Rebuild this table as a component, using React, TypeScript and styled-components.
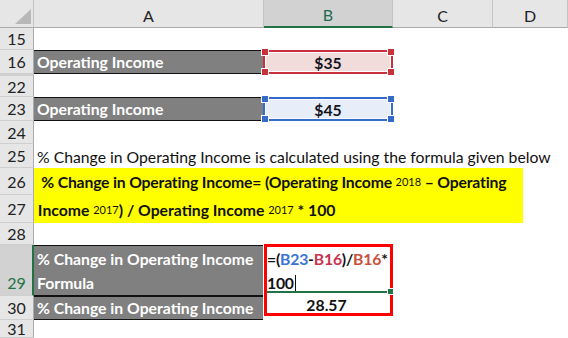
import React from 'react';
import styled, { createGlobalStyle } from 'styled-components';

const Global = createGlobalStyle`
  html, body { margin: 0; padding: 0; background: #fff; }
  body { font-family: Lato, "Open Sans", sans-serif; }
`;

const COLS = '34px 230px 129px 100px 75px';

const Sheet = styled.div`
  width: 568px;
  height: 338px;
  overflow: hidden;
  display: flex;
  flex-direction: column;
  position: relative;
  background: #fff;
  color: #111;
  font-size: 15.75px;
`;

const Row = styled.div<{ $h: number }>`
  display: grid;
  grid-template-columns: ${COLS};
  grid-template-rows: ${(p) => p.$h}px;
  height: ${(p) => p.$h}px;
  flex: none;
  position: relative;
`;

const Corner = styled.div`
  background: #e6e6e6;
  border-right: 1px solid #c4c4c4;
  border-bottom: 1px solid #ababab;
  position: relative;
  &::after {
    content: '';
    position: absolute;
    right: 2px;
    bottom: 3px;
    width: 0;
    height: 0;
    border-left: 16px solid transparent;
    border-bottom: 15px solid #b8b8b8;
  }
`;

const ColHead = styled.div<{ $active?: boolean }>`
  background: ${(p) => (p.$active ? '#d2d2d2' : '#e6e6e6')};
  color: ${(p) => (p.$active ? '#1f6b52' : '#222')};
  border-right: 1px solid #c4c4c4;
  border-bottom: ${(p) => (p.$active ? '2px solid #217346' : '1px solid #ababab')};
  display: flex;
  align-items: center;
  justify-content: center;
  font-size: 16px;
  padding-top: 3px;
  box-sizing: border-box;
`;

const RowNum = styled.div<{ $active?: boolean; $double?: boolean; $bottom?: boolean }>`
  background: ${(p) => (p.$active ? '#d2d2d2' : '#e6e6e6')};
  color: ${(p) => (p.$active ? '#217346' : '#222')};
  border-right: ${(p) => (p.$active ? '2px solid #217346' : '1px solid #ababab')};
  border-bottom: 1px solid #cfcfcf;
  border-top: ${(p) => (p.$double ? '2px solid #cfcfcf' : 'none')};
  box-sizing: border-box;
  display: flex;
  justify-content: center;
  align-items: ${(p) => (p.$bottom ? 'flex-end' : 'center')};
  padding-bottom: ${(p) => (p.$bottom ? '3px' : '0')};
  padding-left: ${(p) => (p.$active ? '1px' : '0')};
  font-size: 16px;
`;

const Cell = styled.div`
  display: flex;
  align-items: center;
  white-space: nowrap;
  min-width: 0;
`;

const GrayCell = styled.div`
  background: #808080;
  color: #fff;
  font-weight: 700;
  border-top: 1px solid #111;
  border-bottom: 1px solid #111;
  box-sizing: border-box;
  padding: 0 0 0 3px;
  display: flex;
  flex-direction: column;
  justify-content: center;
  line-height: 24px;
  white-space: nowrap;
  margin-right: 1px;
  overflow: hidden;
`;

const RangeCell = styled.div<{ $color: string; $fill: string }>`
  position: relative;
  margin: 0 0 0 -1px;
  background: ${(p) => p.$fill};
  border: 2px solid ${(p) => p.$color};
  box-shadow: inset 0 0 0 1px #fff;
  box-sizing: border-box;
  display: flex;
  align-items: center;
  justify-content: center;
  font-weight: 700;
  color: #14141e;
`;

const Handle = styled.span<{ $color: string; $pos: 'tl' | 'tr' | 'bl' | 'br' }>`
  position: absolute;
  width: 6px;
  height: 6px;
  background: ${(p) => p.$color};
  border: 1px solid #fff;
  box-sizing: content-box;
  top: ${(p) => (p.$pos[0] === 't' ? '-4px' : 'auto')};
  bottom: ${(p) => (p.$pos[0] === 'b' ? '-4px' : 'auto')};
  left: ${(p) => (p.$pos[1] === 'l' ? '-4px' : 'auto')};
  right: ${(p) => (p.$pos[1] === 'r' ? '-4px' : 'auto')};
`;

const NoteCell = styled(Cell)`
  grid-column: 2 / -1;
  padding-left: 3px;
  overflow: visible;
`;

const YellowBand = styled.div<{ $tight?: boolean }>`
  grid-column: 2 / -1;
  width: 489px;
  background: #ffff00;
  font-weight: 700;
  display: flex;
  align-items: center;
  white-space: pre;
  color: #111;
  letter-spacing: ${(p) => (p.$tight ? '-0.18px' : '0')};
`;

const Sub = styled.span`
  font-size: 11px;
  vertical-align: -3px;
  font-weight: 400;
  letter-spacing: 0;
`;

const FormulaCell = styled.div`
  position: relative;
  margin-top: -1px;
  border: 3px solid #ff0000;
  border-bottom: none;
  box-sizing: border-box;
  font-weight: 700;
  line-height: 24px;
  display: flex;
  flex-direction: column;
  white-space: nowrap;
  letter-spacing: -0.2px;
  &::after {
    content: '';
    position: absolute;
    left: 0;
    right: 0;
    bottom: 3px;
    height: 2px;
    background: #217346;
  }
`;

const FillHandle = styled.span`
  position: absolute;
  right: -4px;
  bottom: 1px;
  width: 5px;
  height: 5px;
  background: #217346;
  border: 1px solid #fff;
  z-index: 2;
`;

const Ref = styled.span<{ $c: string }>`
  color: ${(p) => p.$c};
`;

const Caret = styled.span`
  display: inline-block;
  width: 1px;
  height: 18px;
  background: #111;
  vertical-align: -4px;
  margin-left: 1px;
`;

const ResultCell = styled.div`
  border: 3px solid #ff0000;
  border-top: none;
  box-sizing: border-box;
  margin-bottom: 4px;
  display: flex;
  align-items: center;
  justify-content: center;
  font-weight: 700;
  padding-right: 4px;
`;

const Blank = styled.div``;

type RangeProps = { color: string; fill: string; value: string };
const RangeBox = ({ color, fill, value }: RangeProps) => (
  <RangeCell $color={color} $fill={fill}>
    {value}
    <Handle $color={color} $pos="tl" />
    <Handle $color={color} $pos="tr" />
    <Handle $color={color} $pos="bl" />
    <Handle $color={color} $pos="br" />
  </RangeCell>
);

export default function App() {
  return (
    <>
      <Global />
      <Sheet>
        <Row $h={28}>
          <Corner />
          <ColHead>A</ColHead>
          <ColHead $active>B</ColHead>
          <ColHead>C</ColHead>
          <ColHead>D</ColHead>
        </Row>
        <Row $h={22}>
          <RowNum>15</RowNum>
        </Row>
        <Row $h={24}>
          <RowNum>16</RowNum>
          <GrayCell>Operating Income</GrayCell>
          <RangeBox color="#c7313c" fill="#f2dcdb" value="$35" />
        </Row>
        <Row $h={23}>
          <RowNum $double>22</RowNum>
        </Row>
        <Row $h={24}>
          <RowNum>23</RowNum>
          <GrayCell>Operating Income</GrayCell>
          <RangeBox color="#356ccc" fill="#e8eef9" value="$45" />
        </Row>
        <Row $h={23}>
          <RowNum>24</RowNum>
        </Row>
        <Row $h={24}>
          <RowNum>25</RowNum>
          <NoteCell>% Change in Operating Income is calculated using the formula given below</NoteCell>
        </Row>
        <Row $h={27}>
          <RowNum>26</RowNum>
          <YellowBand $tight>
            {'  % Change in Operating Income= (Operating Income '}
            <Sub>2018</Sub>
            {' – Operating'}
          </YellowBand>
        </Row>
        <Row $h={28}>
          <RowNum>27</RowNum>
          <YellowBand>
            {' Income '}
            <Sub>2017</Sub>
            {') / Operating Income '}
            <Sub>2017</Sub>
            {' * 100'}
          </YellowBand>
        </Row>
        <Row $h={22}>
          <RowNum>28</RowNum>
        </Row>
        <Row $h={51}>
          <RowNum $active $bottom>29</RowNum>
          <GrayCell>
            <span>% Change in Operating Income</span>
            <span>Formula</span>
          </GrayCell>
          <FormulaCell>
            <span>
              =(<Ref $c="#3a74d4">B23</Ref>-<Ref $c="#c8344e">B16</Ref>)/<Ref $c="#c8503c">B16</Ref>*
            </span>
            <span>
              100<Caret />
            </span>
            <FillHandle />
          </FormulaCell>
        </Row>
        <Row $h={24}>
          <RowNum>30</RowNum>
          <GrayCell>% Change in Operating Income</GrayCell>
          <ResultCell>28.57</ResultCell>
        </Row>
        <Row $h={18}>
          <RowNum>31</RowNum>
          <Blank />
        </Row>
      </Sheet>
    </>
  );
}
